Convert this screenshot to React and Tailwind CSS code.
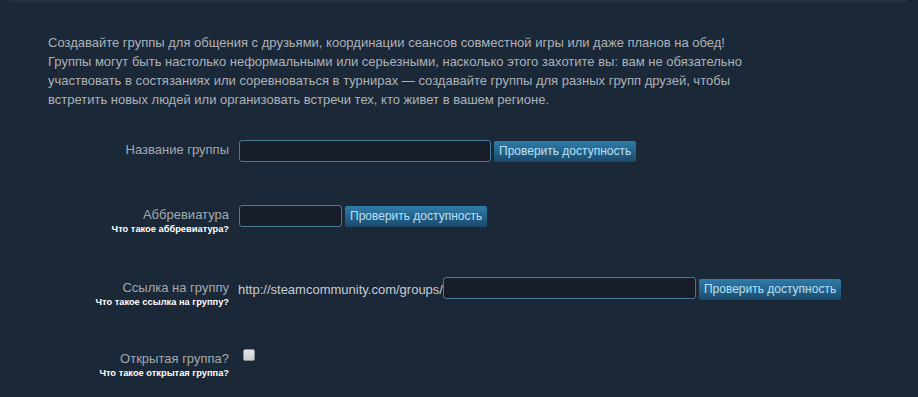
import React from "react";

const font = { fontFamily: '"Liberation Sans", Arial, sans-serif' };

function CheckButton() {
  return (
    <button className="h-[21px] px-[5px] rounded-[2px] bg-gradient-to-b from-[#2f7cab] to-[#1a4a6b] text-[12px] leading-[21px] text-[#b8e0f8] whitespace-nowrap">
      Проверить доступность
    </button>
  );
}

function TextInput({ w }) {
  return (
    <div
      className={`h-[22px] rounded-[3px] border border-[#4b7898] bg-[#171e2a] ${w}`}
    />
  );
}

function Row({ label, help, children, className, labelClass = "" }) {
  return (
    <div className={`flex items-start ${className}`}>
      <div className={`w-[229px] shrink-0 text-right ${labelClass}`}>
        <div className="text-[13px] leading-[16px] text-[#a3a9af]">{label}</div>
        {help && (
          <div className="mt-[1px] text-[9.3px] leading-[10px] font-bold text-white">{help}</div>
        )}
      </div>
      <div className="ml-[10px] flex items-center">{children}</div>
    </div>
  );
}

export default function App() {
  return (
    <div className="w-[918px] h-[397px] bg-[#1b2838] overflow-hidden" style={font}>
      <div className="mx-[9px] w-[898px] h-[2px] bg-[#27313d]" />
      <div className="pl-[48px] pt-[31px] text-[13px] leading-[19px] text-[#acb2b8]">
        Создавайте группы для общения с друзьями, координации сеансов совместной игры или даже планов на обед!
        <br />
        Группы могут быть настолько неформальными или серьезными, насколько этого захотите вы: вам не обязательно
        <br />
        участвовать в состязаниях или соревноваться в турнирах — создавайте группы для разных групп друзей, чтобы
        <br />
        встретить новых людей или организовать встречи тех, кто живет в вашем регионе.
      </div>

      <Row label="Название группы" className="mt-[33px]">
        <div className="-mt-[2px] flex items-center gap-[3px]">
          <TextInput w="w-[252px]" />
          <CheckButton />
        </div>
      </Row>

      <Row label="Аббревиатура" help="Что такое аббревиатура?" className="mt-[45px]">
        <div className="-mt-[2px] flex items-center gap-[3px]">
          <TextInput w="w-[103px]" />
          <CheckButton />
        </div>
      </Row>

      <Row
        label="Ссылка на группу"
        help="Что такое ссылка на группу?"
        className="mt-[43px]"
        labelClass="pt-[3px]"
      >
        <div className="-mt-[1px] flex items-center">
          <span className="text-[13px] text-[#c6ccd2] -ml-[1px] pt-[3px]">http://steamcommunity.com/groups/</span>
          <TextInput w="w-[253px]" />
          <div className="ml-[3px]">
            <CheckButton />
          </div>
        </div>
      </Row>

      <Row label="Открытая группа?" help="Что такое открытая группа?" className="mt-[44px]">
        <div className="ml-[4px] -mt-[2px] w-[12px] h-[12px] rounded-[2px] border border-[#8a8f94] bg-gradient-to-b from-[#e4e4e4] to-[#cfcfcf]" />
      </Row>
    </div>
  );
}
